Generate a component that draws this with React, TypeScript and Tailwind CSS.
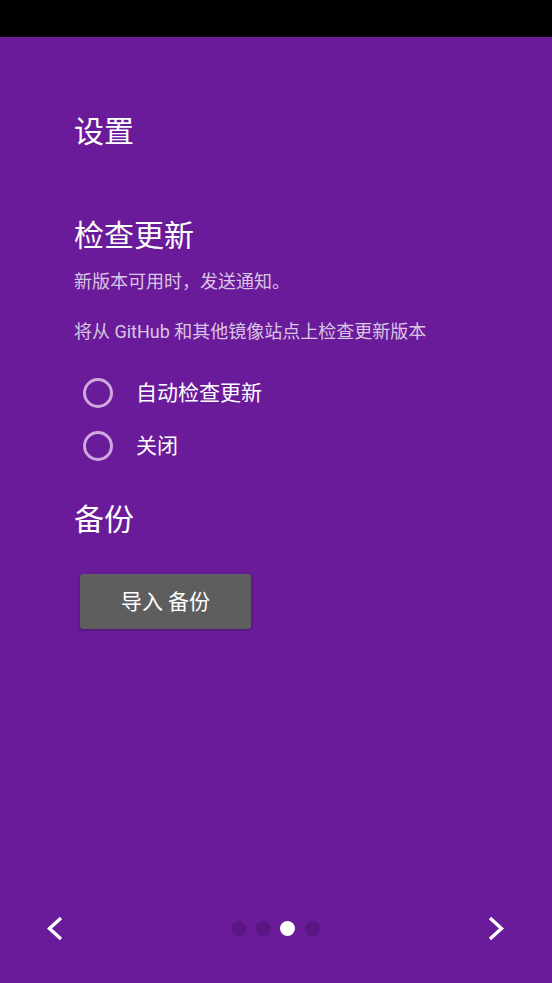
import React from "react";

const font = { fontFamily: 'Roboto, "Noto Sans CJK SC", "Noto Sans", sans-serif' };

function Radio({ label }: { label: string }) {
  return (
    <div className="flex h-[53px] items-center">
      <div className="ml-[9px] h-[30px] w-[30px] rounded-full border-[3px] border-[#cfa8de]" />
      <span className="ml-[23px] text-[21px] leading-[28px] text-white">{label}</span>
    </div>
  );
}

export default function App() {
  return (
    <div className="flex h-[983px] w-[552px] flex-col bg-[#6a1b9a]" style={font}>
      <div className="h-[37px] w-full bg-black" />
      <div className="flex flex-1 flex-col pl-[74px]">
        <div className="mt-[77px] text-[30px] leading-[36px] text-white">设置</div>
        <div className="mt-[68px] text-[30px] leading-[36px] text-white">检查更新</div>
        <div className="mt-[16px] text-[18px] leading-[24px] text-white/75">新版本可用时，发送通知。</div>
        <div className="mt-[26px] text-[18px] leading-[24px] text-white/75">将从 GitHub 和其他镜像站点上检查更新版本</div>
        <div className="mt-[22px] flex flex-col">
          <Radio label="自动检查更新" />
          <Radio label="关闭" />
        </div>
        <div className="mt-[30px] text-[30px] leading-[36px] text-white">备份</div>
        <div className="ml-[6px] mt-[36px]">
          <button className="flex h-[55px] w-[171px] items-center justify-center rounded-[3px] bg-[#5e5e5e] text-[21px] leading-[28px] text-white shadow-[0_1px_3px_rgba(0,0,0,0.35)]">
            导入 备份
          </button>
        </div>
      </div>
      <div className="flex h-[110px] items-center justify-between pl-[46px] pr-[47px]">
        <svg width="17" height="25" viewBox="0 0 17 25" fill="none">
          <path d="M15 2 L3.5 12.5 L15 23" stroke="white" strokeWidth="3.4" />
        </svg>
        <div className="flex items-center gap-[9.5px]">
          <div className="h-[15px] w-[15px] rounded-full bg-[#5a1783]" />
          <div className="h-[15px] w-[15px] rounded-full bg-[#5a1783]" />
          <div className="h-[15px] w-[15px] rounded-full bg-white" />
          <div className="h-[15px] w-[15px] rounded-full bg-[#5a1783]" />
        </div>
        <svg width="17" height="25" viewBox="0 0 17 25" fill="none">
          <path d="M2 2 L13.5 12.5 L2 23" stroke="white" strokeWidth="3.4" />
        </svg>
      </div>
    </div>
  );
}
